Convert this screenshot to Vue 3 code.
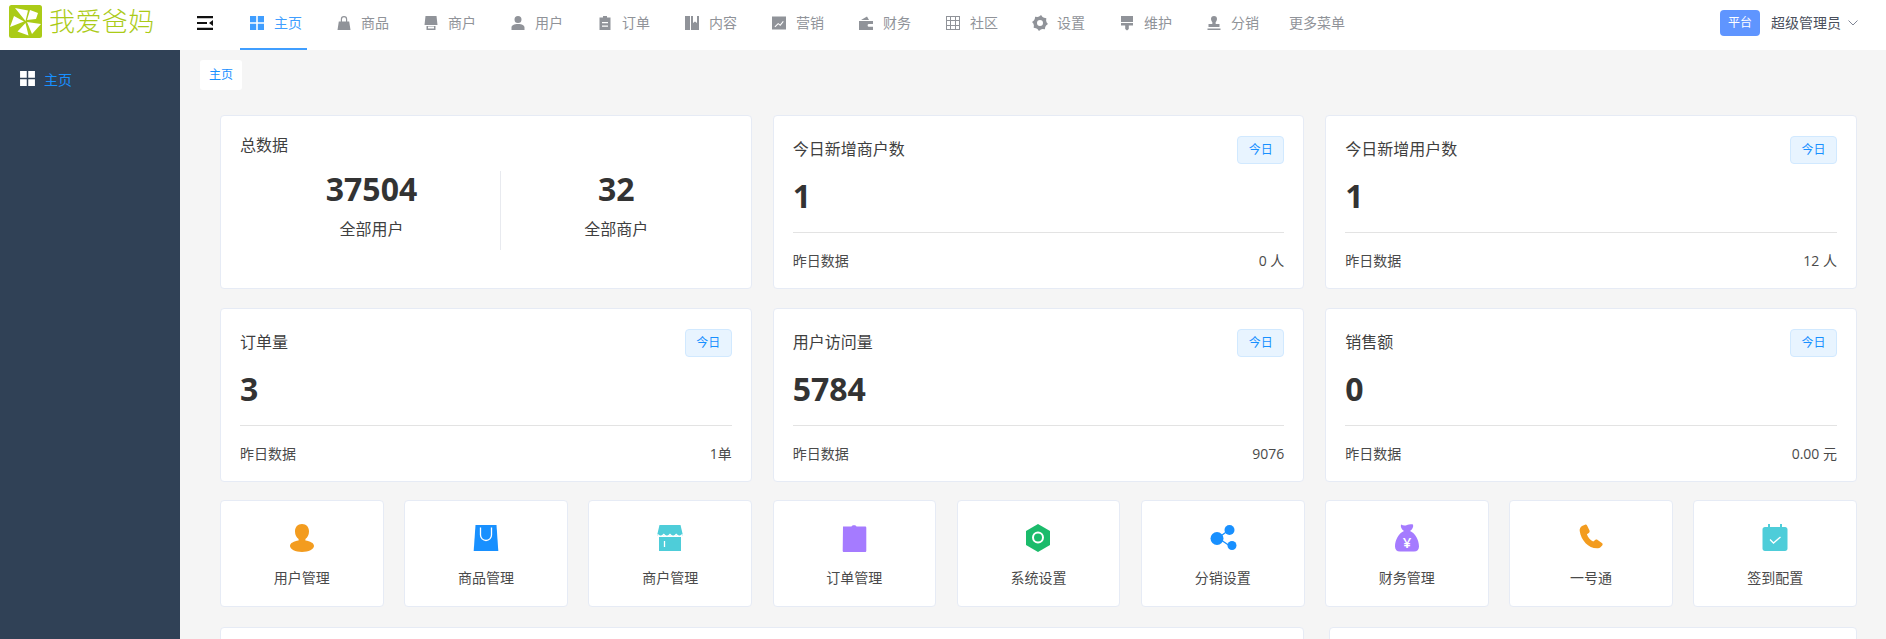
<script setup>
// gear outline with a hole, drawn from alternating radii
const gearPath = () => {
  let d = "";
  for (let i = 0; i < 24; i++) {
    const step = i % 3;
    const r = step === 0 ? 8 : 6.6;
    const a = ((i + 0.5) / 24) * Math.PI * 2;
    d += (i ? "L" : "M") + (8 + r * Math.cos(a)).toFixed(2) + " " + (8 + r * Math.sin(a)).toFixed(2);
  }
  return d + "Z M8 5a3 3 0 1 0 0 6a3 3 0 1 0 0-6Z";
};

const navItems = [
  { label: "主页", active: true, d: "M1 1h6.200v6.200H1z M8.800 1H15v6.200H8.800z M1 8.800h6.200V15H1z M8.800 8.800H15V15H8.800z" },
  { label: "商品", d: "M2.800 6.500h10.400L14.500 15h-13z M4.800 6.500V4.200a3.200 3.200 0 0 1 6.400 0v2.300H10V4.200a2 2 0 0 0-4 0v2.300z" },
  { label: "商户", d: "M2.500 1h11l1 9h-13z M3.500 11h9v4h-9z M5 11.500v2h6v-2z" },
  { label: "用户", d: "M8 1a3.500 3.500 0 1 1 0 7a3.500 3.500 0 1 1 0-7z M1.500 15v-2.500C1.500 10.500 4 9 8 9s6.500 1.500 6.500 3.500V15z" },
  { label: "订单", d: "M2.500 2.500H6V1h4v1.500h3.500V15h-11z M5 7v1.200h6V7z M5 10.500v1.200h6v-1.200z" },
  { label: "内容", d: "M1 1h5v14H1z M7 1h2v7l2-1.600L13 8V1h2v14H7z" },
  { label: "营销", d: "M1 1.500h14v13H1z M3.500 11.500l.8.800 3-3 2 1.600 3.400-4.200-.8-.6-2.800 3.400-2-1.600z" },
  { label: "财务", d: "M1 6h14v9H1z M3 5l6-3.500L11 5z M11 9a1.400 1.400 0 1 0 0 2.800h4V9z" },
  { label: "社区", d: "M1 1h14v14H1z M2 2v3h3V2z M6 2v3h4V2z M11 2v3h3V2z M2 6v4h3V6z M6 6v4h4V6z M11 6v4h3V6z M2 11v3h3v-3z M6 11v3h4v-3z M11 11v3h3v-3z" },
  { label: "设置", d: gearPath() },
  { label: "维护", d: "M2 1h12v6H2z M2 8h12v2.500H9.800V14L8 15.500 6.200 14v-3.500H2z" },
  { label: "分销", d: "M8 1a3 3 0 0 1 3 3c0 1.600-1 2.400-1.400 3.400-.2.700 0 1.200.4 1.600h3.500v3h-11V9H6c.4-.4.600-.9.400-1.600C6 6.400 5 5.600 5 4a3 3 0 0 1 3-3z M1.500 13.500h13V15h-13z" },
];

const todayCards = [
  { title: "今日新增商户数", value: "1", right: "0 人" },
  { title: "今日新增用户数", value: "1", right: "12 人" },
  { title: "订单量", value: "3", right: "1单" },
  { title: "用户访问量", value: "5784", right: "9076" },
  { title: "销售额", value: "0", right: "0.00 元" },
];

const orange = "#f39c1f";
const blue = "#1890ff";
const cyan = "#4ecdd9";
const purple = "#a57bff";

const shortcuts = [
  {
    label: "用户管理",
    shapes: [
      { d: "M15 1c4.400 0 7 3.200 7 7.400 0 3.400-1.600 6-3.600 7.600v1.600c4.600.6 8.600 2.600 8.600 5.400 0 3-5.400 6-12 6S3 26 3 23c0-2.800 4-4.800 8.600-5.400V16C9.600 14.400 8 11.800 8 8.400 8 4.200 10.600 1 15 1z", fill: orange },
    ],
  },
  {
    label: "商品管理",
    shapes: [
      { d: "M4.500 2h21l1.800 26H2.700z", fill: blue },
      { d: "M9.500 4.500v7.500a5.500 5.500 0 0 0 11 0V4.500", fill: "none", stroke: "#fff" },
    ],
  },
  {
    label: "商户管理",
    shapes: [
      { d: "M4.500 2h21l2 8.500v2.300H2.500v-2.300z", fill: cyan },
      { d: "M4 14h22v14H4z", fill: cyan },
      { d: "M2.500 11.500c2 2.500 4 2.500 6.300 0 2 2.500 4.300 2.500 6.200 0 2 2.500 4.300 2.500 6.200 0 2.300 2.500 4.300 2.500 6.300 0", fill: "none", stroke: "#fff" },
      { d: "M9.500 18v6", fill: "none", stroke: "#fff" },
    ],
  },
  {
    label: "订单管理",
    shapes: [
      { d: "M4 3.500h8.500c.5-1.600 4.500-1.600 5 0H26c.8 0 1.300.5 1.300 1.300v23c0 .8-.5 1.200-1.300 1.200H5c-.8 0-1.300-.4-1.300-1.200z", fill: purple },
    ],
  },
  {
    label: "系统设置",
    shapes: [
      { d: "M15 1l12 7v14l-12 7-12-7V8z", fill: "#1bbb6b" },
      { d: "M15 9.500a5 5 0 1 0 0 10a5 5 0 1 0 0-10z", fill: "none", stroke: "#fff", width: 2 },
    ],
  },
  {
    label: "分销设置",
    shapes: [
      { d: "M10 15L21 7M10 15l12 8", fill: "none", stroke: blue },
      { d: "M9 9a6.500 6.500 0 1 0 0 13a6.500 6.500 0 1 0 0-13z", fill: blue },
      { d: "M21.500 2a5 5 0 1 0 0 10a5 5 0 1 0 0-10z", fill: blue },
      { d: "M24 18a4.500 4.500 0 1 0 0 9a4.500 4.500 0 1 0 0-9z", fill: blue },
    ],
  },
  {
    label: "财务管理",
    glyph: "¥",
    shapes: [
      { d: "M9 1.500c2 1.200 4 1.500 6 .6 2-.9 4-.9 6-.6.8 2-.7 5-3 6.500 5 2 9 9 9 15.500 0 3-1.800 5-5 5H8c-3.200 0-5-2-5-5C3 17 7 10 12 8 9.700 6.500 8.200 3.500 9 1.500z", fill: purple },
    ],
  },
  {
    label: "一号通",
    shapes: [
      { d: "M6 3l3-1.300c1-.3 1.700.2 2.200 1.100l2.300 4.700c.4 1 .1 1.800-.7 2.400l-1.900 1.400c1 3.300 3.200 5.900 6.300 7.300l2-1.600c.8-.6 1.600-.6 2.400-.1l4.300 3c.9.700 1 1.700.3 2.500l-1.700 1.900c-.9.900-2 1.200-3.200 1C12.500 25.500 5.200 17.500 3.700 8c-.2-2 .5-3.800 2.300-5z", fill: orange },
    ],
  },
  {
    label: "签到配置",
    shapes: [
      { d: "M8 1h2v3h10V1h2v3h3c1.500 0 2.500 1 2.500 2.500v19c0 1.500-1 2.500-2.500 2.500H5c-1.500 0-2.500-1-2.500-2.500v-19C2.500 5 3.500 4 5 4h3z", fill: cyan },
      { d: "M10 16.500l3.500 3.500 7-6", fill: "none", stroke: "#fff" },
    ],
  },
];
</script>

<template>
  <div class="page">
    <header class="topbar">
      <div class="logo">
        <svg class="logo-mark" viewBox="0 0 33 33">
          <rect width="33" height="33" rx="2.500" fill="#abcb17" />
          <path d="M16.500 16L6 3l13 2.500z M18 15l3-10 8 3-2 6z M18 17l14 2-9 10z M16.500 18l3 12.500-11-4z M15 16.500L1 22l4-11z" fill="#fff" />
        </svg>
        <span class="logo-text">我爱爸妈</span>
      </div>
      <div class="collapse">
        <svg class="collapse-icon" viewBox="0 0 16 14">
          <path d="M0 0h16v2.200H0z M0 5.900h10v2.200H0z M0 11.800h16V14H0z M16 4v6l-4-3z" fill="#111" />
        </svg>
      </div>
      <nav class="nav">
        <a v-for="item in navItems" :key="item.label" class="nav-item" :class="{ active: item.active }">
          <svg class="nav-icon" viewBox="0 0 16 16">
            <path :d="item.d" fill="currentColor" fill-rule="evenodd" />
          </svg>
          <span>{{ item.label }}</span>
        </a>
        <a class="nav-item nav-more">更多菜单</a>
      </nav>
      <div class="user">
        <span class="role">平台</span>
        <span class="user-name">超级管理员</span>
        <svg class="chevron" viewBox="0 0 10 6">
          <path d="M.5.500L5 5 9.500.500" fill="none" stroke="#808695" stroke-width="1" />
        </svg>
      </div>
    </header>

    <div class="body">
      <aside class="sidebar">
        <div class="side-item">
          <svg class="side-icon" viewBox="0 0 16 16">
            <path d="M1 1h6.300v6.300H1z M8.700 1H15v6.300H8.700z M1 8.700h6.300V15H1z M8.700 8.700H15V15H8.700z" fill="#fff" />
          </svg>
          <span>主页</span>
        </div>
      </aside>

      <main class="main">
        <div class="tabs">
          <span class="tab">主页</span>
        </div>

        <div class="content">
          <section class="cards">
            <div class="card total">
              <div class="total-title">总数据</div>
              <div class="total-stats">
                <div class="stat stat-left">
                  <div class="stat-value">37504</div>
                  <div class="stat-label">全部用户</div>
                </div>
                <div class="stat">
                  <div class="stat-value">32</div>
                  <div class="stat-label">全部商户</div>
                </div>
              </div>
            </div>

            <div v-for="c in todayCards" :key="c.title" class="card today">
              <div class="today-head">
                <span class="today-title">{{ c.title }}</span>
                <span class="tag">今日</span>
              </div>
              <div class="today-value">{{ c.value }}</div>
              <div class="today-foot">
                <span>昨日数据</span>
                <span>{{ c.right }}</span>
              </div>
            </div>
          </section>

          <section class="shortcuts">
            <div v-for="s in shortcuts" :key="s.label" class="card shortcut">
              <svg class="shortcut-icon" viewBox="0 0 30 30">
                <path
                  v-for="(shape, i) in s.shapes"
                  :key="i"
                  :d="shape.d"
                  :fill="shape.fill"
                  :stroke="shape.stroke"
                  :stroke-width="shape.width || 1.300"
                />
                <text v-if="s.glyph" x="15" y="25" text-anchor="middle" class="glyph">{{ s.glyph }}</text>
              </svg>
              <span class="shortcut-label">{{ s.label }}</span>
            </div>
          </section>

          <section class="bottom">
            <div class="card bottom-left"></div>
            <div class="card bottom-right"></div>
          </section>
        </div>
      </main>
    </div>
  </div>
</template>

<style>
html,
body {
  margin: 0;
  overflow: hidden;
}
</style>

<style scoped>
.page {
  height: 100vh;
  overflow: hidden;
  display: flex;
  flex-direction: column;
  background: #f5f5f5;
  font-family: "Open Sans", "Noto Sans CJK SC", sans-serif;
  font-size: 14px;
  color: #3f3f3f;
}

.topbar {
  flex: 0 0 50px;
  display: flex;
  align-items: stretch;
  background: #fff;
}

.logo {
  flex: 0 0 197px;
  box-sizing: border-box;
  padding-left: 9px;
  display: flex;
  align-items: center;
  gap: 7px;
  height: 43px;
}

.logo-mark {
  width: 33px;
  height: 33px;
}

.logo-text {
  font-size: 26px;
  letter-spacing: 0.4px;
  line-height: 33px;
  color: #abcb17;
  font-weight: 300;
}

.collapse {
  flex: 0 0 43px;
  display: flex;
  align-items: center;
  height: 46px;
}

.collapse-icon {
  width: 16px;
  height: 14px;
}

.nav {
  display: flex;
}

.nav-item {
  box-sizing: border-box;
  height: 50px;
  padding: 0 5px 4px 9px;
  margin-right: 20px;
  display: flex;
  align-items: center;
  gap: 9px;
  color: #909399;
  line-height: 20px;
}

.nav-item.active {
  color: #409eff;
  border-bottom: 2px solid #409eff;
  padding-bottom: 2px;
}

.nav-more {
  margin-left: -4px;
}

.nav-icon {
  width: 16px;
  height: 16px;
  flex: none;
}

.user {
  margin-left: auto;
  padding-right: 28px;
  display: flex;
  align-items: center;
  height: 46px;
}

.role {
  width: 40px;
  height: 26px;
  border-radius: 4px;
  background: #5f95ff;
  color: #fff;
  font-size: 12px;
  line-height: 26px;
  text-align: center;
  margin-right: 11px;
}

.user-name {
  color: #4a4f5c;
  line-height: 20px;
}

.chevron {
  width: 10px;
  height: 6px;
  margin-left: 7px;
}

.body {
  flex: 1;
  display: flex;
  min-height: 0;
}

.sidebar {
  flex: 0 0 180px;
  background: #304156;
}

.side-item {
  display: flex;
  align-items: center;
  gap: 8px;
  height: 57px;
  padding-left: 19px;
  color: #1890ff;
}

.side-icon {
  width: 17px;
  height: 17px;
}

.main {
  flex: 1;
  min-width: 0;
}

.tabs {
  padding: 10px 0 0 20px;
}

.tab {
  display: block;
  width: 42px;
  height: 30px;
  border-radius: 3px;
  background: #fff;
  color: #1890ff;
  font-size: 12px;
  line-height: 30px;
  text-align: center;
}

.content {
  padding: 25px 29px 0 40px;
}

.card {
  box-sizing: border-box;
  background: #fff;
  border: 1px solid #e6ebf5;
  border-radius: 4px;
}

.cards {
  display: grid;
  grid-template-columns: repeat(3, 1fr);
  gap: 19px 21px;
}

.total {
  padding: 18px 19px 0;
}

.total-title {
  font-size: 16px;
  line-height: 22px;
}

.total-stats {
  display: grid;
  grid-template-columns: 261px 1fr;
  margin-top: 15px;
  height: 79px;
  text-align: center;
}

.stat-left {
  padding-left: 3px;
  border-right: 1px solid #e8eaef;
}

.stat-value {
  font-size: 32px;
  font-weight: 700;
  line-height: 36px;
  color: #333;
}

.stat-label {
  margin-top: 12px;
  font-size: 16px;
  line-height: 20px;
}

.today {
  height: 174px;
  padding: 20px 19px 0;
}

.today-head {
  display: flex;
  justify-content: space-between;
  align-items: center;
  height: 28px;
}

.today-title {
  font-size: 16px;
  line-height: 22px;
  margin-top: -2px;
}

.tag {
  box-sizing: border-box;
  width: 47px;
  height: 28px;
  border: 1px solid #d1e9ff;
  border-radius: 4px;
  background: #e8f4ff;
  color: #1890ff;
  font-size: 12px;
  line-height: 26px;
  text-align: center;
}

.today-value {
  margin-top: 11px;
  padding-bottom: 15px;
  border-bottom: 1px solid #e3e3e3;
  font-size: 32px;
  font-weight: 700;
  line-height: 42px;
  color: #333;
}

.today-foot {
  display: flex;
  justify-content: space-between;
  margin-top: 18px;
  line-height: 20px;
  color: #4a4a4a;
}

.shortcuts {
  display: grid;
  grid-template-columns: repeat(9, 1fr);
  gap: 20.500px;
  margin-top: 18px;
}

.shortcut {
  height: 107px;
  display: flex;
  flex-direction: column;
  align-items: center;
  padding-top: 22px;
}

.shortcut-icon {
  width: 30px;
  height: 30px;
}

.glyph {
  font-family: "Open Sans", sans-serif;
  font-size: 15px;
  font-weight: 600;
  fill: #fff;
}

.shortcut-label {
  margin-top: 15px;
  line-height: 20px;
  color: #4a4a4a;
}

.bottom {
  display: flex;
  justify-content: space-between;
  margin-top: 20px;
}

.bottom-left {
  flex: 0 0 1084px;
  height: 300px;
}

.bottom-right {
  flex: 0 0 528px;
  height: 300px;
}
</style>
